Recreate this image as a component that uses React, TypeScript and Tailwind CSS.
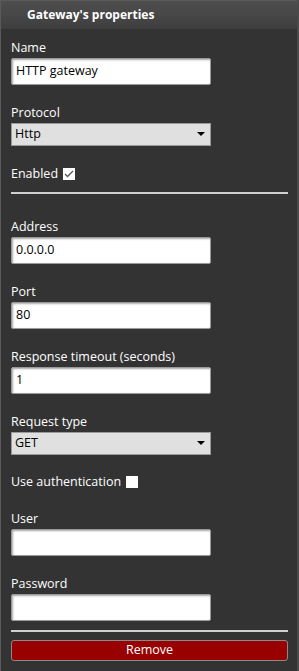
import React from 'react';

const font = { fontFamily: '"Open Sans", "Noto Sans", sans-serif' };

function Label({ children }: { children: React.ReactNode }) {
  return <div className="text-[12.5px] leading-[16px] text-white mb-[2px]">{children}</div>;
}

function TextBox({ value }: { value?: string }) {
  return (
    <div className="w-[200px] h-[27px] bg-white border border-[#9a9a9a] rounded-[2px] shadow-[inset_1px_1px_2px_rgba(0,0,0,0.35)] flex items-center px-[4px] text-[12.5px] text-black">
      {value}
    </div>
  );
}

function Select({ value }: { value: string }) {
  return (
    <div className="w-[200px] h-[23px] bg-[#e0e0e0] border border-[#9a9a9a] flex items-center justify-between pl-[3px] pr-[5px] text-[12.5px] text-black">
      <span>{value}</span>
      <svg width="8" height="5" viewBox="0 0 8 5">
        <path d="M0 0h8L4 4z" fill="#000" />
      </svg>
    </div>
  );
}

function CheckBox({ checked }: { checked?: boolean }) {
  return (
    <span className="inline-flex w-[12px] h-[12px] bg-white items-center justify-center ml-[5px]">
      {checked && (
        <svg width="10" height="10" viewBox="0 0 10 10">
          <path d="M1 5l2.5 2.5L9 2" stroke="#555" strokeWidth="1.3" fill="none" />
        </svg>
      )}
    </span>
  );
}

function Field({ label, children, mb = 'mb-[20px]' }: { label: string; children: React.ReactNode; mb?: string }) {
  return (
    <div className={mb}>
      <Label>{label}</Label>
      {children}
    </div>
  );
}

export default function App() {
  return (
    <div className="w-[299px] h-[671px] bg-[#333333] flex overflow-hidden" style={font}>
      <div className="flex-1 border-t border-l border-[#5a5a5a]">
        <div className="h-[28px] bg-gradient-to-b from-[#4d4d4d] via-[#474747] to-[#3e3e3e] flex items-center pl-[26px] text-white font-bold text-[12px]">
          Gateway's properties
        </div>
        <div className="pl-[10px] pr-[9px] pt-[11px]">
          <Field label="Name">
            <TextBox value="HTTP gateway" />
          </Field>
          <Field label="Protocol">
            <Select value="Http" />
          </Field>
          <div className="flex items-center text-[12.5px] leading-[16px] text-white">
            Enabled
            <CheckBox checked />
          </div>
          <div className="h-[2px] bg-[#d0d0d0] mt-[10px] mb-[25px]" />
          <Field label="Address">
            <TextBox value="0.0.0.0" />
          </Field>
          <Field label="Port">
            <TextBox value="80" />
          </Field>
          <Field label="Response timeout (seconds)">
            <TextBox value="1" />
          </Field>
          <Field label="Request type" mb="mb-[19px]">
            <Select value="GET" />
          </Field>
          <div className="flex items-center text-[12.5px] leading-[16px] text-white mb-[21px]">
            Use authentication
            <CheckBox />
          </div>
          <Field label="User">
            <TextBox />
          </Field>
          <Field label="Password" mb="mb-[9px]">
            <TextBox />
          </Field>
          <div className="h-[2px] bg-[#d0d0d0] mb-[8px]" />
          <div className="h-[21px] bg-[#990000] border border-[#8a8a8a] rounded-[3px] flex items-center justify-center text-white text-[12.5px]">
            Remove
          </div>
        </div>
      </div>
      <div className="w-[2px] bg-[#4a4a4a]" />
    </div>
  );
}
